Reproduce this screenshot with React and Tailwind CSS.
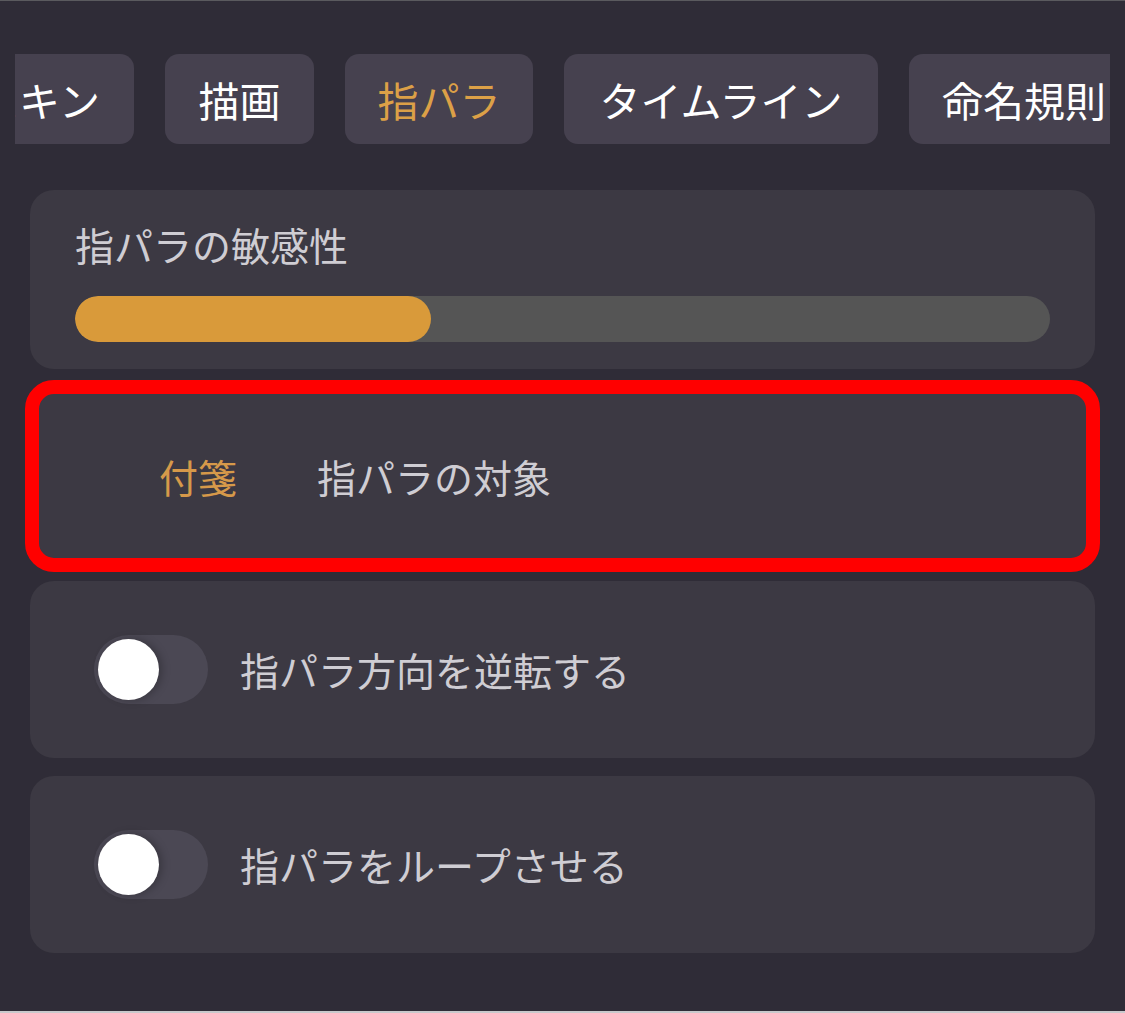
import React, { useState } from 'react';

const tabs = [
  { label: 'スキン', w: 'w-[190px]' },
  { label: '描画', w: 'w-[149px]' },
  { label: '指パラ', w: 'w-[188px]', active: true },
  { label: 'タイムライン', w: 'w-[314px]' },
  { label: '命名規則', w: 'w-[230px]' },
];

function Toggle({ on, onChange }) {
  return (
    <button
      onClick={() => onChange(!on)}
      className="relative w-[114px] h-[69px] rounded-full bg-[#4b4854] shrink-0"
    >
      <span
        className={`absolute top-[4px] w-[61px] h-[61px] rounded-full bg-white shadow-[3px_0_8px_rgba(0,0,0,0.25)] ${on ? 'left-[49px]' : 'left-[4px]'}`}
      />
    </button>
  );
}

export default function App() {
  const [reverse, setReverse] = useState(false);
  const [loop, setLoop] = useState(false);
  const sensitivity = 36;

  return (
    <div
      className="w-[1125px] h-[1013px] bg-[#2f2c37] border-t border-[#5a5a5e] border-b-2 border-b-[#c9c9cc] overflow-hidden"
      style={{ fontFamily: '"Noto Sans CJK JP", "Noto Sans", sans-serif' }}
    >
      {/* tab strip, scrolled sideways */}
      <div className="mt-[53px] ml-[15px] w-[1095px] h-[90px] overflow-hidden">
        <div className="flex gap-[31px] -ml-[71px]">
          {tabs.map(t => (
            <div
              key={t.label}
              className={`${t.w} h-[90px] shrink-0 rounded-[14px] bg-[#46414f] flex items-center justify-center text-[41px] leading-none ${t.active ? 'text-[#dca047]' : 'text-white'}`}
            >
              {t.label}
            </div>
          ))}
        </div>
      </div>

      <div className="px-[30px] mt-[46px] flex flex-col">
        <div className="h-[179px] rounded-[24px] bg-[#3c3943] px-[45px] pt-[26px]">
          <div className="text-[39px] leading-[56px] text-[#cfcdd3]">指パラの敏感性</div>
          <div className="mt-[24px] h-[46px] rounded-full bg-[#555555] overflow-hidden">
            <div className="h-full rounded-full bg-[#d99a3a]" style={{ width: `${sensitivity}.5%` }} />
          </div>
        </div>

        <div className="mt-[16px] h-[182px] rounded-[24px] bg-[#3c3943] outline-[14px] outline-solid outline-[#ff0000] -outline-offset-[9px] flex items-center text-[39px] leading-none">
          <span className="ml-[129px] text-[#d6994a]">付箋</span>
          <span className="ml-[80px] text-[#cfcdd3]">指パラの対象</span>
        </div>

        <div className="mt-[14px] h-[177px] rounded-[24px] bg-[#3c3943] flex items-center pl-[64px] gap-[32px]">
          <Toggle on={reverse} onChange={setReverse} />
          <span className="text-[39px] leading-none text-[#cfcdd3]">指パラ方向を逆転する</span>
        </div>

        <div className="mt-[18px] h-[177px] rounded-[24px] bg-[#3c3943] flex items-center pl-[64px] gap-[32px]">
          <Toggle on={loop} onChange={setLoop} />
          <span className="text-[39px] leading-none text-[#cfcdd3]">指パラをループさせる</span>
        </div>
      </div>
    </div>
  );
}
